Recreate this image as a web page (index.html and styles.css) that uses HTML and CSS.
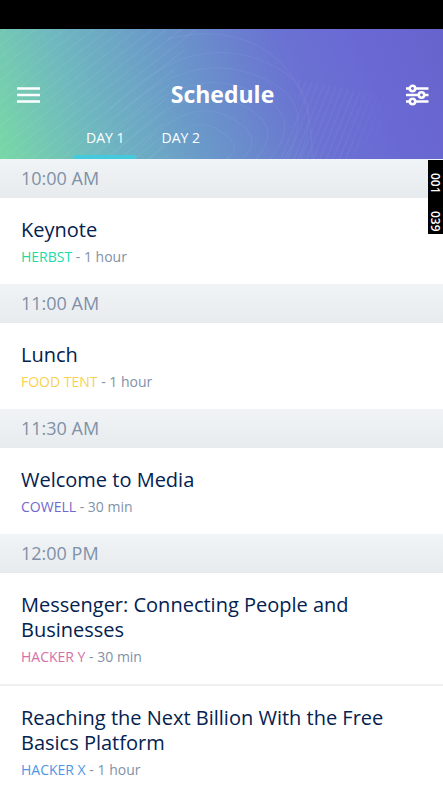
FILE: index.html
```html
<!DOCTYPE html>
<html lang="en">
<head>
<meta charset="utf-8">
<meta name="viewport" content="width=device-width, initial-scale=1">
<title>Schedule</title>
<link rel="stylesheet" href="styles.css">
</head>
<body>
<div class="status-bar"></div>
<header class="header">
  <svg class="waves" viewBox="0 0 443 129" preserveAspectRatio="none" aria-hidden="true">
    <defs>
      <pattern id="left-lines" width="9" height="9" patternUnits="userSpaceOnUse" patternTransform="rotate(-38)">
        <path d="M0 4H9"/>
      </pattern>
      <pattern id="right-lines" width="6" height="6" patternUnits="userSpaceOnUse" patternTransform="rotate(-68)">
        <path d="M0 3H6"/>
      </pattern>
      <linearGradient id="fade">
        <stop offset="0" stop-color="#fff"/>
        <stop offset="0.6" stop-color="#fff"/>
        <stop offset="1" stop-color="#000"/>
      </linearGradient>
      <mask id="fade-right"><rect x="270" width="130" height="129" fill="url(#fade)"/></mask>
    </defs>
    <path class="fill-left" d="M0 0H200Q150 60 170 129H0Z"/>
    <path class="fill-right" mask="url(#fade-right)" d="M275 129Q306 90 296 50L400 70Q380 100 350 129Z"/>
    <path d="M150 129Q190 82 218 100T226 129M130 129Q184 66 226 86T242 129M110 129Q180 50 234 72T256 129M90 129Q174 34 242 58T270 129M100 104Q176 20 250 44T284 129M110 80Q184 4 258 30T298 129M168 10Q230 -6 272 26T312 129"/>
  </svg>
  <div class="title-row">
    <button class="icon-button" type="button" aria-label="Menu">
      <svg width="24" height="24" viewBox="0 0 24 24"><path d="M1 5.500H24M1 12H24M1 18.500H24"/></svg>
    </button>
    <h1 class="title">Schedule</h1>
    <button class="icon-button" type="button" aria-label="Filter">
      <svg width="24" height="24" viewBox="0 0 24 24"><path d="M1 5.500H4.500M10.500 5.500H23.500M1 12H13.500M19.500 12H23.500M1 18.500H4.500M10.500 18.500H23.500"/><circle cx="7.500" cy="5.500" r="2.700"/><circle cx="16.500" cy="12" r="2.700"/><circle cx="7.500" cy="18.500" r="2.700"/></svg>
    </button>
  </div>
  <nav class="tabs">
    <button class="tab tab-active" type="button">DAY 1</button>
    <button class="tab" type="button">DAY 2</button>
  </nav>
</header>
<main class="schedule">
  <div class="debug-badge"><span>001</span><span>039</span></div>
  <section>
    <h2 class="time">10:00 AM</h2>
    <article class="session"><h3 class="name">Keynote</h3><p class="meta"><span class="herbst">HERBST</span> - 1 hour</p></article>
  </section>
  <section>
    <h2 class="time">11:00 AM</h2>
    <article class="session"><h3 class="name">Lunch</h3><p class="meta"><span class="food">FOOD TENT</span> - 1 hour</p></article>
  </section>
  <section>
    <h2 class="time">11:30 AM</h2>
    <article class="session"><h3 class="name">Welcome to Media</h3><p class="meta"><span class="cowell">COWELL</span> - 30 min</p></article>
  </section>
  <section>
    <h2 class="time">12:00 PM</h2>
    <article class="session"><h3 class="name">Messenger: Connecting People and Businesses</h3><p class="meta"><span class="hacker-y">HACKER Y</span> - 30 min</p></article>
    <article class="session"><h3 class="name">Reaching the Next Billion With the Free Basics Platform</h3><p class="meta"><span class="hacker-x">HACKER X</span> - 1 hour</p></article>
  </section>
</main>
</body>
</html>
```
FILE: styles.css
```css
* { box-sizing: border-box; margin: 0; padding: 0; }

body {
  height: 100vh;
  display: flex;
  flex-direction: column;
  font-family: "Open Sans", "Noto Sans", sans-serif;
  background: #fff;
  color: #032250;
}

button { border: 0; background: none; color: inherit; font: inherit; }

.status-bar { height: 29px; flex: none; background: #000; }

.header {
  position: relative;
  flex: none;
  padding-top: 46px;
  color: #fff;
  background: linear-gradient(68deg, #78d8a6 0%, #6fb9bf 20%, #6a97ca 43%, #6a72d2 66%, #6a69d4 82%, #6763cc 100%);
}

.waves { position: absolute; inset: 0; width: 100%; height: 100%; }
.waves path { fill: none; stroke: #fff; stroke-opacity: 0.06; }
.waves .fill-left { fill: url(#left-lines); stroke: none; }
.waves .fill-right { fill: url(#right-lines); stroke: none; }

.title-row {
  position: relative;
  display: flex;
  align-items: center;
  justify-content: space-between;
  height: 40px;
  padding: 0 14px 0 16px;
}

.icon-button { display: flex; }
.icon-button path, .icon-button circle { fill: none; stroke: #fff; stroke-width: 2.5; }

.title { padding-bottom: 3px; font-size: 23px; line-height: 32px; font-weight: 700; }

.tabs { position: relative; display: flex; gap: 13px; padding-left: 74px; }

.tab {
  height: 44px;
  padding: 6px 12px 0;
  border-bottom: 4px solid transparent;
  font-size: 14px;
  line-height: 20px;
}
.tab-active { border-bottom-color: #45c9dc; }

.schedule {
  position: relative;
  flex: 1;
  min-height: 0;
  overflow-y: auto;
  scrollbar-width: none;
}

.time {
  height: 39px;
  padding-left: 21px;
  font-size: 18px;
  line-height: 38px;
  font-weight: 400;
  color: #7f91a7;
  background: linear-gradient(#f1f4f7, #e8ebee);
}

.session { padding: 19px 21px 17px; }
.session + .session { border-top: 2px solid #eff0f2; }

.name { font-size: 20px; line-height: 25px; font-weight: 400; }
.meta { margin-top: 5px; font-size: 14px; line-height: 20px; color: #7f91a7; }

.herbst { color: #20dba8; }
.food { color: #fad24b; }
.cowell { color: #7069cc; }
.hacker-y { color: #d66fa8; }
.hacker-x { color: #4f96e6; }

.debug-badge {
  position: absolute;
  top: 1px;
  right: 0;
  display: flex;
  justify-content: space-between;
  width: 15px;
  height: 74px;
  padding: 13px 0 2px;
  writing-mode: vertical-rl;
  background: #000;
  color: #fff;
  font-size: 12px;
  line-height: 15px;
  font-weight: 600;
}
```
